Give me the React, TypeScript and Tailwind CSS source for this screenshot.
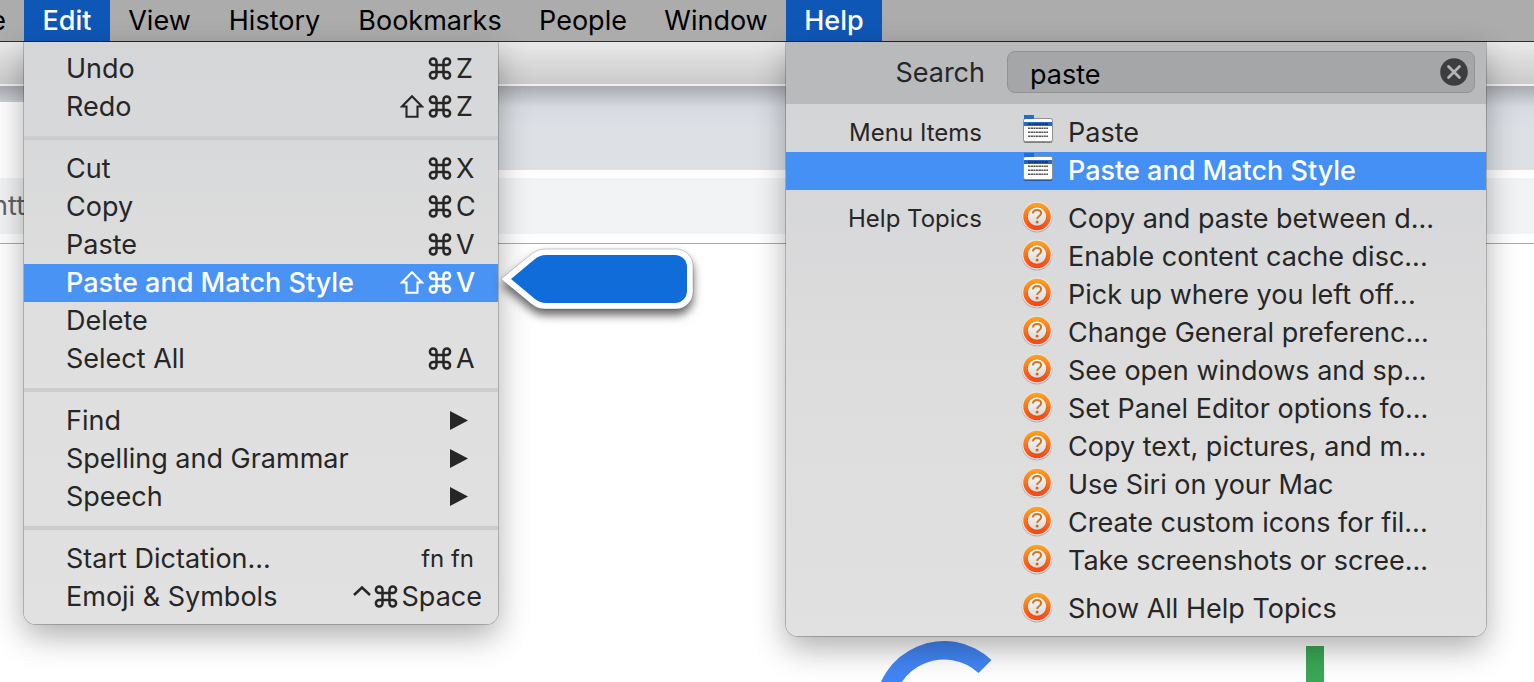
import { useState } from "react";

type EditItem = {
  label: string;
  modifiers?: string;
  letter?: string;
  submenu?: boolean;
};

const editGroups: EditItem[][] = [
  [
    { label: "Undo", modifiers: "⌘", letter: "Z" },
    { label: "Redo", modifiers: "⇧⌘", letter: "Z" },
  ],
  [
    { label: "Cut", modifiers: "⌘", letter: "X" },
    { label: "Copy", modifiers: "⌘", letter: "C" },
    { label: "Paste", modifiers: "⌘", letter: "V" },
    { label: "Paste and Match Style", modifiers: "⇧⌘", letter: "V" },
    { label: "Delete" },
    { label: "Select All", modifiers: "⌘", letter: "A" },
  ],
  [
    { label: "Find", submenu: true },
    { label: "Spelling and Grammar", submenu: true },
    { label: "Speech", submenu: true },
  ],
  [
    { label: "Start Dictation...", letter: "fn fn" },
    { label: "Emoji & Symbols", modifiers: "^⌘", letter: "Space" },
  ],
];

const helpTopics = [
  "Copy and paste between d...",
  "Enable content cache disc...",
  "Pick up where you left off...",
  "Change General preferenc...",
  "See open windows and sp...",
  "Set Panel Editor options fo...",
  "Copy text, pictures, and m...",
  "Use Siri on your Mac",
  "Create custom icons for fil...",
  "Take screenshots or scree...",
];

const ACTIVE = "Paste and Match Style";

const Modifier = ({ symbol }: { symbol: string }) => {
  if (symbol === "⇧") {
    return (
      <svg className="w-6 h-6 mr-1" viewBox="0 0 24 24" fill="none" stroke="currentColor" strokeWidth="2.1" role="img" aria-label="Shift">
        <path d="M12 1.200 22 11.500h-4.500v10.300h-11V11.500H2z" />
      </svg>
    );
  }
  if (symbol === "^") {
    return (
      <svg className="w-5 h-6 mr-0.5" viewBox="0 0 20 24" fill="none" stroke="currentColor" strokeWidth="2.5" role="img" aria-label="Control">
        <path d="M2 10 10 2.500l8 7.500" />
      </svg>
    );
  }
  return (
    <svg className="w-6 h-6 mr-1" viewBox="0 0 24 24" fill="none" stroke="currentColor" strokeWidth="2.5" role="img" aria-label="Command">
      <path d="M8.500 8h7v7h-7zM8.500 8H5.200a3.300 3.300 0 1 1 3.300-3.300zM15.500 8h3.300a3.300 3.300 0 1 0-3.300-3.300zM8.500 15H5.200a3.300 3.300 0 1 0 3.300 3.300zM15.500 15h3.300a3.300 3.300 0 1 1-3.300 3.300z" />
    </svg>
  );
};

const Callout = () => (
  <svg
    className="absolute left-full -top-5 w-[200px] h-[72px] drop-shadow-[0_6px_5px_rgba(0,0,0,0.6)]"
    viewBox="0 0 200 72"
    aria-hidden="true"
  >
    <path
      d="M3 35 34 9.500Q39.500 5 47 5H178a17 17 0 0 1 17 17V48a17 17 0 0 1-17 17H47q-7.500 0-13-4.500z"
      fill="#fff"
      stroke="#00000033"
    />
    <path d="M13 35 37 15q5-4 11-4H177a12 12 0 0 1 12 12V47a12 12 0 0 1-12 12H48q-6 0-11-4z" fill="#0f6cd8" />
  </svg>
);

const MenuIcon = () => (
  <svg className="w-8 h-8" viewBox="0 0 32 32" aria-hidden="true">
    <rect x="2.500" y="5" width="29" height="23" rx="2" fill="#00000066" />
    <rect x="2.500" y="3.500" width="29" height="23" rx="2" fill="#fff" stroke="#8f9194" />
    <path d="M3 0h10v4H3z" fill="#276bcc" />
    <path d="M3 7h28v4H3z" fill="#2468cc" />
    <path d="M7 9.200h20" stroke="#173a6b" strokeWidth="1.700" strokeDasharray="3 .5 2 .4 4 .5" />
    <path d="M7 13.300h20M7 17.300h20M7 21.300h20" stroke="#555" strokeWidth="1.600" strokeDasharray="2 .5 3 .4 1.500 .5" />
  </svg>
);

const TopicIcon = () => (
  <svg className="w-8 h-8" viewBox="0 0 32 32" aria-hidden="true">
    <defs>
      <linearGradient id="ring" x1="0" y1="0" x2="0" y2="1">
        <stop offset="0" stopColor="#ffa51f" />
        <stop offset="1" stopColor="#fb4214" />
      </linearGradient>
      <linearGradient id="disc" x1="0" y1="0" x2="0" y2="1">
        <stop offset="0" stopColor="#fafafa" />
        <stop offset="1" stopColor="#d9d9d9" />
      </linearGradient>
    </defs>
    <circle cx="16" cy="16.200" r="15.300" fill="#b0b0b0" />
    <circle cx="16" cy="15.500" r="15" fill="#e6e6e6" />
    <circle cx="16" cy="15.500" r="13.700" fill="url(#ring)" />
    <circle cx="16" cy="16" r="9.900" fill="#b5501a" opacity=".5" />
    <circle cx="16" cy="15.500" r="9.200" fill="url(#disc)" />
    <path
      d="M12 12.500c0-2.300 1.700-3.600 4.100-3.600s4 1.300 4 3.400c0 3-4 2.900-4 5.700"
      fill="none"
      stroke="#cf7622"
      strokeWidth="2"
    />
    <circle cx="16.100" cy="21" r="1.500" fill="#cf6a1c" />
  </svg>
);

const EditMenu = () => (
  <div className="absolute left-0 top-[42px] w-[474px] pt-2 pb-2 rounded-b-xl bg-linear-to-b from-[#d5d6d8] via-[#dfdfdf] to-[#e1e1e1] text-[#262626] shadow-[0_0_0_1px_rgba(0,0,0,0.2),0_12px_32px_rgba(0,0,0,0.32)]">
    {editGroups.map((group, index) => (
      <div key={index}>
        {index > 0 && (
          <div className="h-6 pt-[10px]">
            <div className="h-1 bg-[#cbcccd]" />
          </div>
        )}
        <ul>
          {group.map((item) => (
            <li key={item.label} className="relative">
              <button
                className={`w-full h-[38px] pl-[42px] pr-4 flex items-center text-left ${
                  item.label === ACTIVE ? "bg-[#4993f5] text-white font-medium" : ""
                }`}
              >
                <span className="flex-1 whitespace-nowrap">{item.label}</span>
                {item.modifiers?.split("").map((symbol) => (
                  <Modifier key={symbol} symbol={symbol} />
                ))}
                {item.letter && (
                  <span className={item.letter === "fn fn" ? "text-2xl mr-2" : "min-w-[26px]"}>{item.letter}</span>
                )}
                {item.submenu && (
                  <svg className="w-5 h-5 mr-[13px]" viewBox="0 0 20 20" fill="currentColor" aria-hidden="true">
                    <path d="M1 0 19 9.500 1 19z" />
                  </svg>
                )}
              </button>
              {item.label === ACTIVE && <Callout />}
            </li>
          ))}
        </ul>
      </div>
    ))}
  </div>
);

type HelpRowProps = {
  label: string;
  heading?: string;
  menuItem?: boolean;
};

const HelpRow = ({ label, heading, menuItem }: HelpRowProps) => (
  <li>
    <button
      className={`w-full h-[38px] flex items-center text-left whitespace-nowrap ${
        label === ACTIVE ? "bg-[#4490f4] text-white font-medium" : ""
      }`}
    >
      <span className="w-[196px] mr-[39px] text-right text-2xl">{heading}</span>
      <span className="mr-[15px] pb-1">{menuItem ? <MenuIcon /> : <TopicIcon />}</span>
      <span>{label}</span>
    </button>
  </li>
);

const HelpMenu = () => {
  const [query, setQuery] = useState("paste");

  return (
    <div className="absolute left-0 top-[42px] w-[700px] pb-2 rounded-b-xl bg-linear-to-b from-[#d2d3d5] via-[#dcdcdd] to-[#e1e1e1] text-[#262626] shadow-[0_0_0_1px_rgba(0,0,0,0.2),0_12px_32px_rgba(0,0,0,0.32)]">
      <div className="h-[62px] flex items-center bg-[#b9babc]">
        <label htmlFor="help-search" className="w-[199px] mr-[22px] text-right">
          Search
        </label>
        <div className="relative flex-1 mr-[11px] pb-0.5">
          <input
            id="help-search"
            type="text"
            value={query}
            onChange={(e) => setQuery(e.target.value)}
            className="block w-full h-[42px] pl-[22px] pr-12 pt-1 rounded-lg border border-[#929395] bg-[#a5a6a8] text-black outline-none"
          />
          <button
            aria-label="Clear search"
            onClick={() => setQuery("")}
            className="absolute right-[7px] top-[7px] w-7 h-7"
          >
            <svg viewBox="0 0 28 28" aria-hidden="true">
              <circle cx="14" cy="14" r="13.800" fill="#3d3e40" />
              <path d="m8.500 8.500 11 11m0-11-11 11" stroke="#b4b5b6" strokeWidth="2.800" strokeLinecap="round" />
            </svg>
          </button>
        </div>
      </div>
      <ul className="pt-[10px]">
        <HelpRow heading="Menu Items" label="Paste" menuItem />
        <HelpRow label={ACTIVE} menuItem />
      </ul>
      <ul className="pt-[10px]">
        {helpTopics.map((topic, index) => (
          <HelpRow key={topic} heading={index === 0 ? "Help Topics" : undefined} label={topic} />
        ))}
      </ul>
      <ul className="pt-[10px]">
        <HelpRow label="Show All Help Topics" />
      </ul>
    </div>
  );
};

const MenuBar = () => (
  <nav className="relative z-10 h-[42px] flex border-b border-[#2e2e2e] bg-[#acacac] text-black whitespace-nowrap">
    <button className="w-6 pr-[18px] flex items-center justify-end overflow-hidden">File</button>
    <div className="relative w-[86px]">
      <button className="w-full h-full bg-[#0f57b7] text-white font-medium">Edit</button>
      <EditMenu />
    </div>
    <button className="w-[99px]">View</button>
    <button className="w-[131px]">History</button>
    <button className="w-[180px]">Bookmarks</button>
    <button className="w-[126px]">People</button>
    <button className="w-[140px]">Window</button>
    <div className="relative w-24">
      <button className="w-full h-full bg-[#0f57b7] text-white font-medium">Help</button>
      <HelpMenu />
    </div>
  </nav>
);

const Browser = () => (
  <div>
    <div className="h-11 border-b-2 border-[#f0f0f0] bg-linear-to-b from-[#e9e9ea] to-[#cbcbcb]" />
    <div className="h-[84px] flex items-end bg-linear-to-b from-[#a9abaf] via-[#d7dae0] via-25% to-[#dde1e6] to-50%">
      <div className="w-[260px] h-[68px] bg-white" />
    </div>
    <div className="h-[74px] py-2 border-b border-[#a9a9a9]">
      <div className="h-14 flex items-center bg-[#f1f3f5] text-[#5f6368]">
        <span className="-ml-2">http</span>
      </div>
    </div>
    <main className="pt-[397px] pl-[872px]">
      <svg className="block w-[480px] h-[41px]" viewBox="872 641 480 41" role="img" aria-label="Logo">
        <path d="M875 710a69 69 0 0 1 116.500-50l-13 13A51 51 0 0 0 893 710z" fill="#4285f4" />
        <path d="M1306 646h18v40h-18z" fill="#3aa757" />
      </svg>
    </main>
  </div>
);

const App = () => {
  return (
    <div className="min-h-screen overflow-hidden bg-white font-['Inter',sans-serif] text-[27px] leading-8">
      <MenuBar />
      <Browser />
    </div>
  );
};

export default App;
